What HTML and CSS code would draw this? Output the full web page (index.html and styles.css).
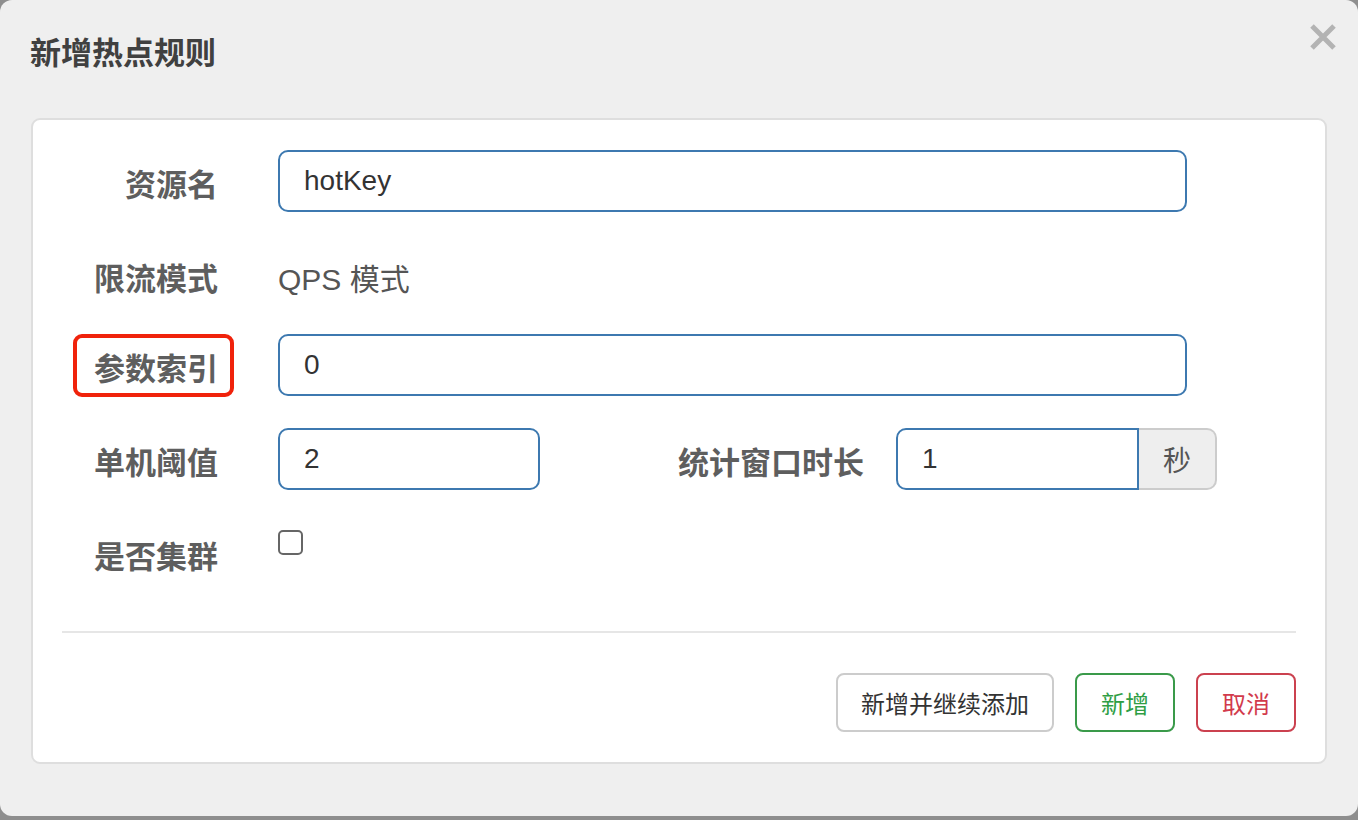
FILE: index.html
```html
<!DOCTYPE html>
<html lang="zh-CN">
<head>
<meta charset="utf-8">
<title>新增热点规则</title>
<link rel="stylesheet" href="styles.css">
</head>
<body>
<div class="modal">
  <div class="modal-header">
    <h4 class="title">新增热点规则</h4>
    <button class="close" type="button" aria-label="关闭">
      <svg width="26" height="26" viewBox="0 0 26 26"><path d="M2 2 L24 24 M24 2 L2 24" stroke="#b3b3b3" stroke-width="5" fill="none"/></svg>
    </button>
  </div>
  <div class="panel">
    <form class="form">
      <div class="row">
        <label class="lbl">资源名</label>
        <input class="ctl wide" type="text" value="hotKey">
      </div>
      <div class="row row-static">
        <label class="lbl">限流模式</label>
        <div class="static">QPS 模式</div>
      </div>
      <div class="row">
        <label class="lbl marked">参数索引<span class="mark"></span></label>
        <input class="ctl wide" type="text" value="0">
      </div>
      <div class="row">
        <label class="lbl">单机阈值</label>
        <input class="ctl short" type="text" value="2">
        <label class="lbl lbl2">统计窗口时长</label>
        <div class="group">
          <input class="ctl grp-input" type="text" value="1">
          <span class="addon">秒</span>
        </div>
      </div>
      <div class="row">
        <label class="lbl">是否集群</label>
        <input class="check" type="checkbox">
      </div>
    </form>
    <div class="divider"></div>
    <div class="actions">
      <button class="btn btn-default" type="button">新增并继续添加</button>
      <button class="btn btn-success" type="button">新增</button>
      <button class="btn btn-danger" type="button">取消</button>
    </div>
  </div>
</div>
</body>
</html>
```
FILE: styles.css
```css
html, body {
  margin: 0;
  padding: 0;
}
body {
  background: #8e8e8e;
  width: 1358px;
  height: 820px;
  overflow: hidden;
  font-family: "Liberation Sans", "Noto Sans CJK SC", sans-serif;
}
.modal {
  width: 1358px;
  height: 816px;
  background: #efefef;
  border-radius: 12px;
  box-sizing: border-box;
}
.modal-header {
  height: 118px;
  box-sizing: border-box;
  padding: 24px 22px 0 30px;
  display: flex;
  justify-content: space-between;
  align-items: flex-start;
}
.title {
  margin: 10px 0 0;
  font-size: 31px;
  line-height: 40px;
  font-weight: 700;
  color: #404040;
}
.close {
  border: 0;
  background: none;
  padding: 0;
  width: 26px;
  height: 26px;
  display: block;
}
.close svg { display: block; }
.panel {
  margin: 0 31px;
  height: 646px;
  box-sizing: border-box;
  background: #fff;
  border: 2px solid #dedede;
  border-radius: 9px;
  padding-top: 30px;
}
.form {
  display: flex;
  flex-direction: column;
  gap: 32px;
}
.row {
  display: flex;
  align-items: flex-start;
}
.row-static { height: 58px; }
.lbl {
  width: 185px;
  margin-right: 60px;
  flex: none;
  text-align: right;
  padding-top: 15px;
  font-size: 31px;
  line-height: 42px;
  font-weight: 700;
  color: #5e5e5e;
  box-sizing: border-box;
}
.marked { position: relative; }
.mark {
  position: absolute;
  left: 40px;
  top: 0;
  width: 161px;
  height: 63px;
  box-sizing: border-box;
  border: 4px solid #f0220b;
  border-radius: 9px;
}
.static {
  padding-top: 15px;
  font-size: 30px;
  line-height: 42px;
  color: #555;
}
.ctl {
  height: 62px;
  box-sizing: border-box;
  border: 2px solid #3d79b0;
  border-radius: 10px;
  padding: 0 24px;
  font-family: "Liberation Sans", "Noto Sans CJK SC", sans-serif;
  font-size: 28px;
  color: #333;
  background: #fff;
  outline: none;
  margin: 0;
}
.wide { width: 909px; }
.short { width: 262px; }
.lbl2 {
  width: 324px;
  margin-right: 32px;
}
.group {
  display: flex;
  width: 321px;
  height: 62px;
}
.grp-input {
  width: 243px;
  border-radius: 10px 0 0 10px;
}
.addon {
  flex: 1;
  display: flex;
  align-items: center;
  justify-content: center;
  background: #eee;
  border: 2px solid #ccc;
  border-left: 0;
  border-radius: 0 10px 10px 0;
  font-size: 28px;
  color: #555;
}
.check {
  appearance: none;
  -webkit-appearance: none;
  margin: 8px 0 0;
  width: 25px;
  height: 25px;
  box-sizing: border-box;
  border: 2px solid #666;
  border-radius: 5px;
  background: #fff;
}
.divider {
  margin: 52px 29px 0;
  height: 2px;
  background: #e6e6e6;
}
.actions {
  margin-top: 40px;
  padding-right: 29px;
  display: flex;
  justify-content: flex-end;
  gap: 21px;
}
.btn {
  height: 59px;
  padding: 0 24px;
  box-sizing: border-box;
  border: 2px solid #ccc;
  border-radius: 8px;
  background: #fff;
  font-family: "Liberation Sans", "Noto Sans CJK SC", sans-serif;
  font-size: 24px;
  color: #333;
}
.btn-default { padding: 0 23px; }
.btn-success {
  border-color: #3a9a4a;
  color: #2f9e45;
}
.btn-danger {
  border-color: #cb414f;
  color: #d23a4c;
}
```
